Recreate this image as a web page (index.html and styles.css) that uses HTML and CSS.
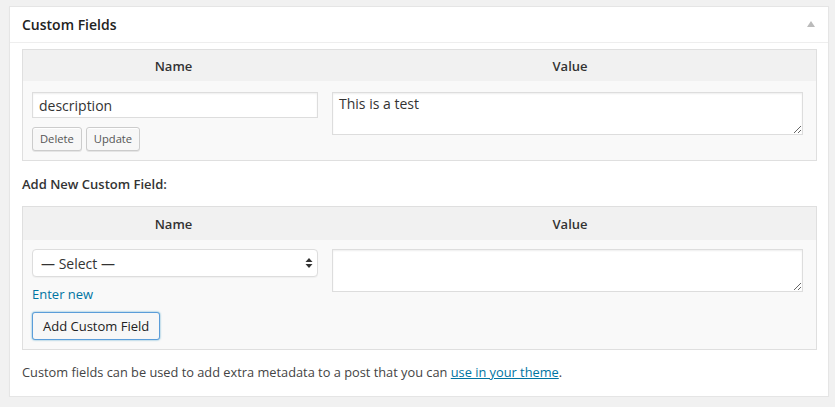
FILE: index.html
```html
<!DOCTYPE html>
<html>
<head>
<meta charset="utf-8">
<link rel="stylesheet" href="styles.css">
</head>
<body>
<div class="postbox">
  <div class="hndle">
    <h2 class="title">Custom Fields</h2>
    <span class="toggle"></span>
  </div>
  <div class="inside">
    <div class="meta-table">
      <div class="thead">
        <div class="th">Name</div>
        <div class="th">Value</div>
      </div>
      <div class="tbody">
        <div class="cell left">
          <input class="text" type="text" value="description">
          <div class="btns">
            <button class="btn small">Delete</button>
            <button class="btn small">Update</button>
          </div>
        </div>
        <div class="cell right">
          <textarea class="area">This is a test</textarea>
        </div>
      </div>
    </div>

    <p class="addnew">Add New Custom Field:</p>

    <div class="meta-table new">
      <div class="thead">
        <div class="th">Name</div>
        <div class="th">Value</div>
      </div>
      <div class="tbody">
        <div class="cell left">
          <span class="select-wrap">
            <select class="select"><option>— Select —</option></select>
            <svg class="arrows" width="8" height="12" viewBox="0 0 8 12"><path d="M4 1 L7.5 5 L0.5 5 Z M4 11 L7.5 7 L0.5 7 Z" fill="#333"/></svg>
          </span>
          <a class="enter" href="#">Enter new</a>
          <button class="btn focus">Add Custom Field</button>
        </div>
        <div class="cell right">
          <textarea class="area"></textarea>
        </div>
      </div>
    </div>

    <p class="note">Custom fields can be used to add extra metadata to a post that you can <a href="#">use in your theme</a>.</p>
  </div>
</div>
</body>
</html>
```

FILE: styles.css
```css
* { box-sizing: border-box; }
html, body { margin: 0; padding: 0; }
body {
  background: #f1f1f1;
  font-family: "Open Sans", "Liberation Sans", sans-serif;
  font-size: 13px;
  color: #444;
  padding: 6px 0 0 9px;
}
.postbox {
  width: 820px;
  background: #fff;
  border: 1px solid #e5e5e5;
  box-shadow: 0 1px 1px rgba(0,0,0,.04);
}
.hndle {
  display: flex;
  align-items: center;
  justify-content: space-between;
  height: 36px;
  padding: 0 13px 0 12px;
  border-bottom: 1px solid #eee;
}
.title {
  margin: 0;
  font-size: 14px;
  font-weight: 600;
  color: #222;
  line-height: 1.4;
}
.toggle {
  width: 0; height: 0;
  border-left: 4px solid transparent;
  border-right: 4px solid transparent;
  border-bottom: 6px solid #bbb;
  margin-top: -1px;
}
.inside {
  padding: 6px 11px 14px 12px;
}
.meta-table {
  border: 1px solid #dfdfdf;
  background: #f9f9f9;
}
.thead {
  display: grid;
  grid-template-columns: 301px 1fr;
  background: #f1f1f1;
  height: 31px;
  align-items: center;
}
.meta-table.new .thead {
  height: 33px;
}
.th {
  text-align: center;
  font-weight: 600;
  color: #333;
  font-size: 13px;
}
.tbody {
  display: grid;
  grid-template-columns: 301px 1fr;
}
.cell.left {
  padding: 11px 6px 9px 9px;
  display: flex;
  flex-direction: column;
  align-items: flex-start;
}
.cell.right {
  padding: 11px 13px 8px 8px;
}
.meta-table.new .cell {
  padding-top: 9px;
}
.text {
  width: 286px;
  height: 26px;
  border: 1px solid #ddd;
  box-shadow: inset 0 1px 2px rgba(0,0,0,.07);
  font-family: inherit;
  font-size: 14px;
  color: #333;
  padding: 2px 6px;
  margin: 0;
  outline: none;
}
.btns {
  display: flex;
  gap: 4px;
  margin-top: 9px;
}
.btn {
  font-family: inherit;
  font-size: 13px;
  color: #555;
  background: #f7f7f7;
  border: 1px solid #ccc;
  border-radius: 3px;
  box-shadow: inset 0 1px 0 #fff, 0 1px 0 rgba(0,0,0,.08);
  padding: 0 10px;
  height: 28px;
  line-height: 26px;
  margin: 0;
  cursor: pointer;
  white-space: nowrap;
}
.btn.small {
  font-size: 11.2px;
  height: 24px;
  line-height: 22px;
  padding: 0 7px;
}
.btn.focus {
  color: #222;
  border-color: #5b9dd9;
  box-shadow: 0 0 2px rgba(30,140,190,.8);
  margin-top: 9px;
  padding: 0 10px;
  height: 28px;
}
.area {
  display: block;
  width: 100%;
  height: 43px;
  border: 1px solid #ddd;
  box-shadow: inset 0 1px 2px rgba(0,0,0,.07);
  font-family: inherit;
  font-size: 14px;
  color: #333;
  padding: 1px 6px;
  margin: 0;
  resize: vertical;
  outline: none;
}
.addnew {
  margin: 0;
  height: 45px;
  line-height: 46px;
  font-weight: 600;
  color: #333;
}
.select-wrap {
  position: relative;
  display: block;
  width: 286px;
}
.select {
  -webkit-appearance: none;
  appearance: none;
  width: 286px;
  height: 28px;
  border: 1px solid #ddd;
  border-radius: 4px;
  background: #fff;
  font-family: inherit;
  font-size: 14px;
  color: #333;
  padding: 0 8px;
  margin: 0;
  box-shadow: 0 1px 1px rgba(0,0,0,.04);
}
.arrows {
  position: absolute;
  right: 5px;
  top: 8px;
}
.enter {
  color: #0074a2;
  text-decoration: none;
  font-size: 13px;
  margin-top: 9px;
  line-height: 17px;
}
.note {
  margin: 12px 0 0;
  line-height: 20px;
  font-size: 12.8px;
  color: #444;
}
.note a {
  color: #0074a2;
  text-decoration: underline;
}
```
